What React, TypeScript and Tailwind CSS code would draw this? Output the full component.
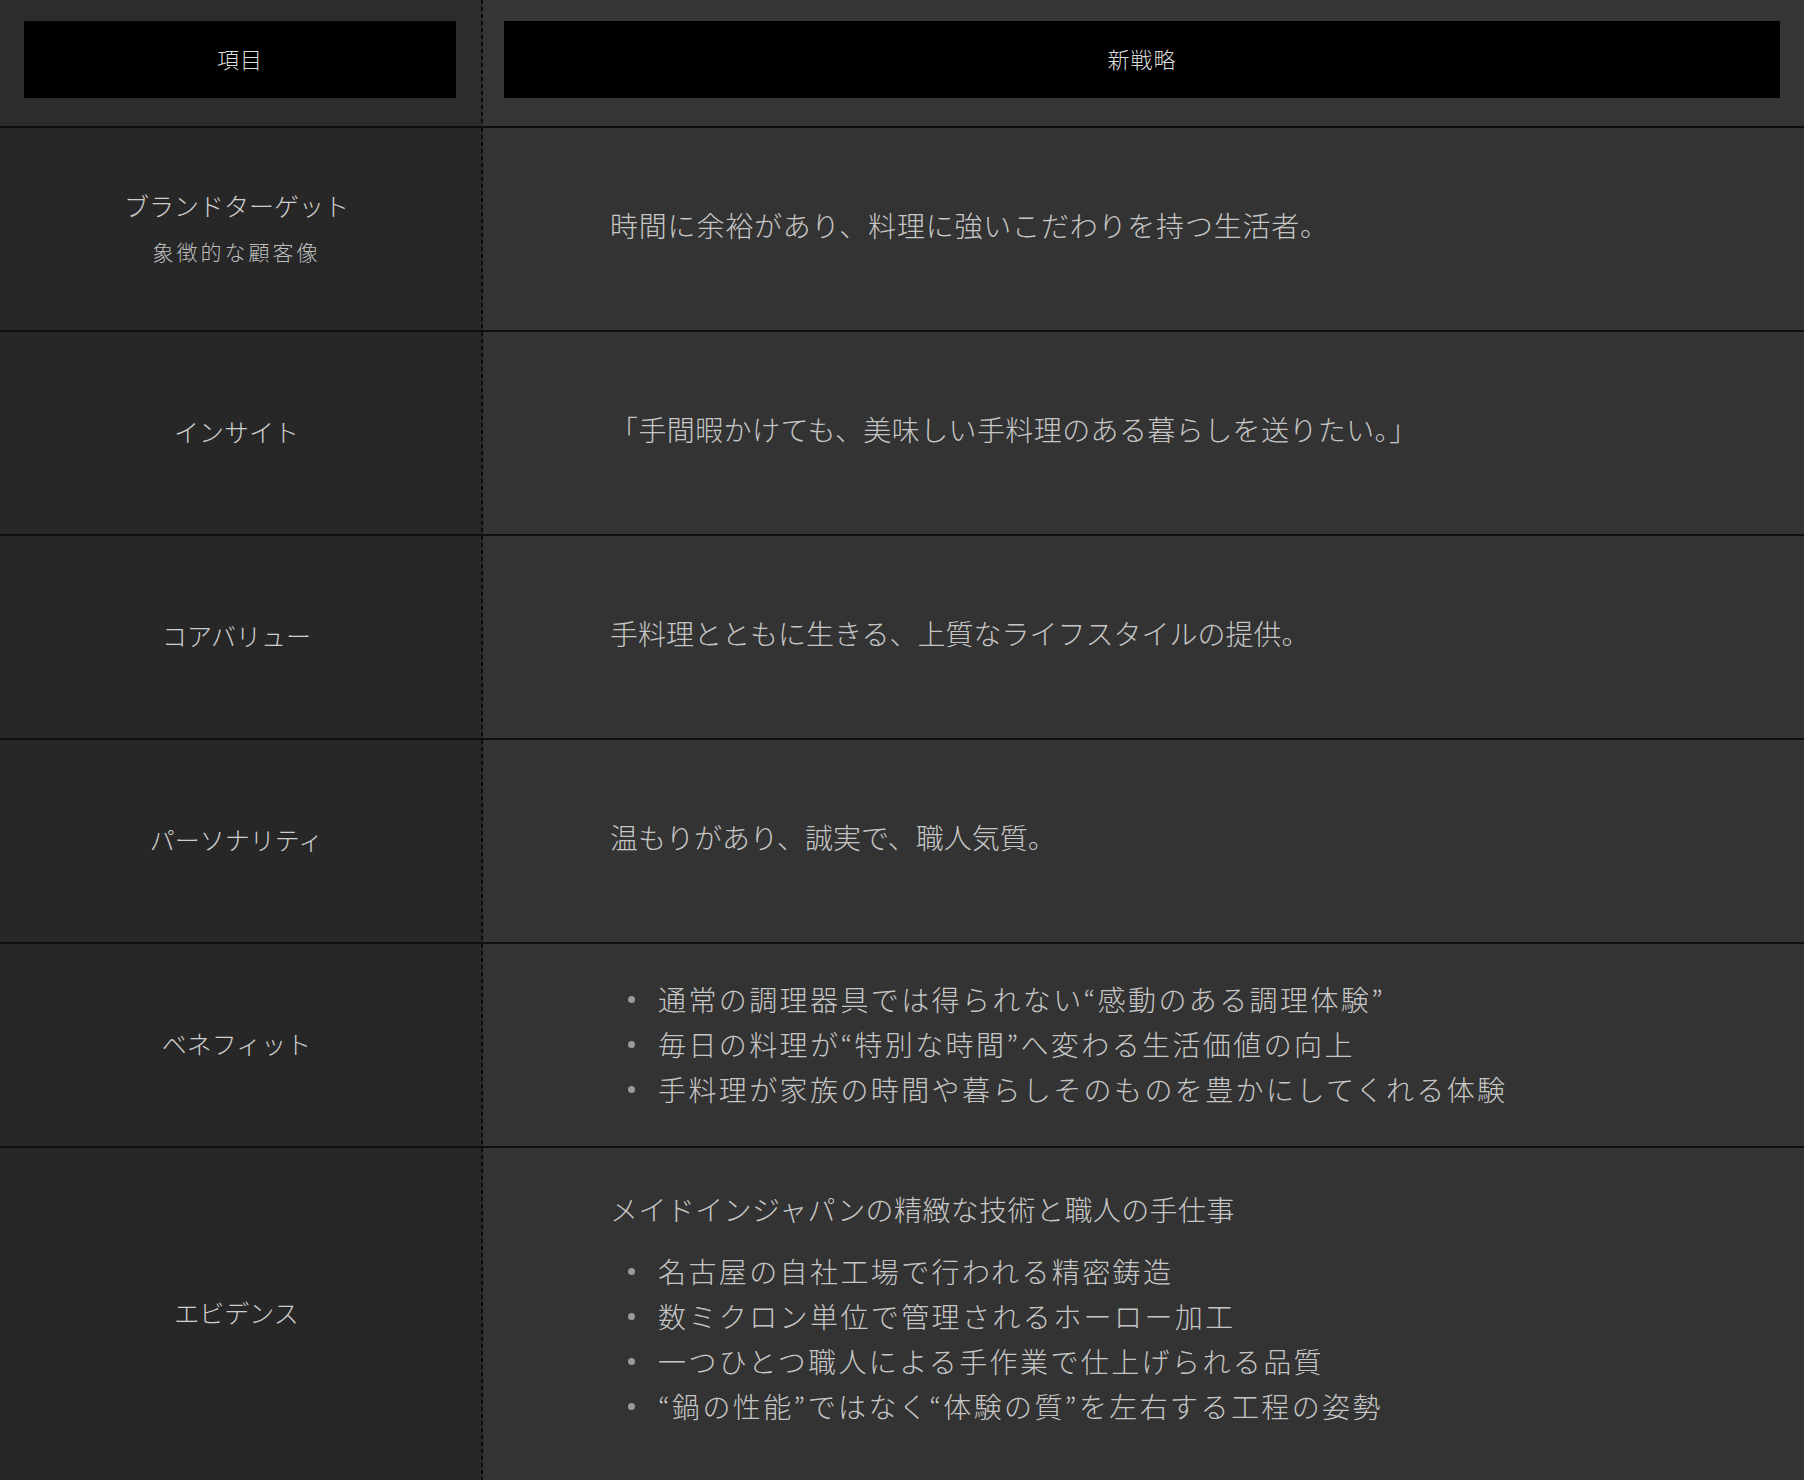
import React from "react";

type Row = {
  label: string;
  sub?: string;
  content: React.ReactNode;
  h: string;
  pb: string;
};

function Bullets({ items }: { items: string[] }) {
  return (
    <ul className="pl-[18px]">
      {items.map((t) => (
        <li key={t} className="flex items-center leading-[45px] tracking-[2.4px]">
          <span className="w-[7px] h-[7px] rounded-full bg-[#9a9a9a] shrink-0 mr-[23px]" />
          <span>{t}</span>
        </li>
      ))}
    </ul>
  );
}

const rows: Row[] = [
  {
    label: "ブランドターゲット",
    sub: "象徴的な顧客像",
    content: <p className="tracking-[0.8px]">時間に余裕があり、料理に強いこだわりを持つ生活者。</p>,
    h: "h-[202px]",
    pb: "pb-[9px]",
  },
  {
    label: "インサイト",
    content: <p className="tracking-[0.4px]">「手間暇かけても、美味しい手料理のある暮らしを送りたい。」</p>,
    h: "h-[202px]",
    pb: "pb-[9px]",
  },
  {
    label: "コアバリュー",
    content: <p className="tracking-[0px]">手料理とともに生きる、上質なライフスタイルの提供。</p>,
    h: "h-[202px]",
    pb: "pb-[9px]",
  },
  {
    label: "パーソナリティ",
    content: <p className="tracking-[0px]">温もりがあり、誠実で、職人気質。</p>,
    h: "h-[202px]",
    pb: "pb-[9px]",
  },
  {
    label: "ベネフィット",
    content: (
      <Bullets
        items={[
          "通常の調理器具では得られない“感動のある調理体験”",
          "毎日の料理が“特別な時間”へ変わる生活価値の向上",
          "手料理が家族の時間や暮らしそのものを豊かにしてくれる体験",
        ]}
      />
    ),
    h: "h-[202px]",
    pb: "pb-[2px]",
  },
  {
    label: "エビデンス",
    content: (
      <div>
        <p className="leading-[45px] tracking-[0.4px]">メイドインジャパンの精緻な技術と職人の手仕事</p>
        <div className="mt-[17px]">
          <Bullets
            items={[
              "名古屋の自社工場で行われる精密鋳造",
              "数ミクロン単位で管理されるホーロー加工",
              "一つひとつ職人による手作業で仕上げられる品質",
              "“鍋の性能”ではなく“体験の質”を左右する工程の姿勢",
            ]}
          />
        </div>
      </div>
    ),
    h: "h-[332px]",
    pb: "pb-[12px]",
  },
];

function Divider() {
  return (
    <div className="w-[2px] shrink-0 self-stretch bg-[image:repeating-linear-gradient(to_bottom,#0b0b0b_0px,#0b0b0b_4px,transparent_4px,transparent_7px)]" />
  );
}

export default function App() {
  return (
    <div className="w-[1804px] h-[1480px] bg-[#333333] font-['Noto_Sans_CJK_JP',sans-serif] font-light text-[#c9c9c9] overflow-hidden">
      {/* header */}
      <div className="flex h-[128px] border-b-2 border-[#0e0e0e] bg-[#2c2c2c]">
        <div className="w-[481px] shrink-0 pl-[24px] pr-[25px] pt-[21px]">
          <div className="h-[77px] bg-black flex items-center justify-center pb-[2px] text-[22px] tracking-[1px] text-[#dedede]">
            項目
          </div>
        </div>
        <Divider />
        <div className="flex-1 bg-[#353535] pl-[21px] pr-[24px] pt-[21px]">
          <div className="h-[77px] bg-black flex items-center justify-center pb-[2px] text-[22px] tracking-[1px] text-[#dedede]">
            新戦略
          </div>
        </div>
      </div>

      {rows.map((r, i) => (
        <div
          key={r.label}
          className={`flex bg-[#272727] ${i < rows.length - 1 ? "border-b-2 border-[#0e0e0e]" : ""}`}
        >
          <div className={`w-[481px] shrink-0 ${r.h} flex flex-col items-center justify-center pr-[8px] pb-[5px]`}>
            <div className="text-[25px] leading-[40px] text-[#cfcfcf]">{r.label}</div>
            {r.sub && (
              <div className="mt-[8px] text-[21px] leading-[36px] tracking-[3px] text-[#bdbdbd]">{r.sub}</div>
            )}
          </div>
          <Divider />
          <div className={`flex-1 ${r.h} ${r.pb} bg-[#333333] flex items-center pl-[127px] text-[28px] text-[#c6c6c6]`}>
            {r.content}
          </div>
        </div>
      ))}
    </div>
  );
}
